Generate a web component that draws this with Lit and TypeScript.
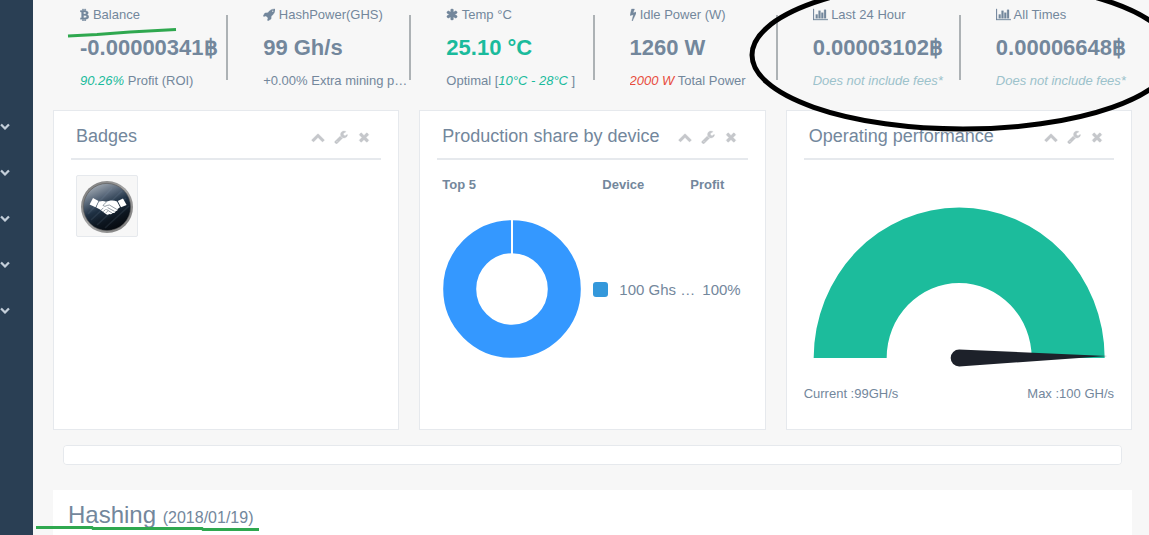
import { LitElement, html, svg, css } from "lit";
import { customElement } from "lit/decorators.js";

const ICONS: Record<string, { w: number; d: string }> = {
  up: { w: 1792, d: "M1683 1331l-166 165q-19 19-45 19t-45-19l-531-531-531 531q-19 19-45 19t-45-19l-166-165q-19-19-19-45.5t19-45.5l742-741q19-19 45-19t45 19l742 741q19 19 19 45.5t-19 45.5z" },
  down: { w: 1792, d: "M1683 808l-742 741q-19 19-45 19t-45-19l-742-741q-19-19-19-45.5t19-45.5l166-165q19-19 45-19t45 19l531 531 531-531q19-19 45-19t45 19l166 165q19 19 19 45.5t-19 45.5z" },
  close: { w: 1792, d: "M1490 1322q0 40-28 68l-136 136q-28 28-68 28t-68-28l-294-294-294 294q-28 28-68 28t-68-28l-136-136q-28-28-28-68t28-68l294-294-294-294q-28-28-28-68t28-68l136-136q28-28 68-28t68 28l294 294 294-294q28-28 68-28t68 28l136 136q28 28 28 68t-28 68l-294 294 294 294q28 28 28 68z" },
  wrench: { w: 1792, d: "M448 1472q0-26-19-45t-45-19-45 19-19 45 19 45 45 19 45-19 19-45zm644-420l-682 682q-37 37-90 37-52 0-91-37l-106-108q-38-36-38-90 0-53 38-91l681-681q39 98 114.5 173.5t173.5 114.5zm634-435q0 39-23 106-47 134-164.5 217.5t-258.5 83.5q-185 0-316.5-131.5t-131.5-316.5 131.5-316.5 316.5-131.5q58 0 121.5 16.5t107.5 46.5q16 11 16 28t-16 28l-293 169v224l193 107q5-3 79-48.5t135.5-81 70.5-35.5q15 0 23.5 10t8.5 25z" },
  rocket: { w: 1664, d: "M1440 448q0-40-28-68t-68-28-68 28-28 68 28 68 68 28 68-28 28-68zm224-288q0 249-75.5 430.5t-253.5 360.5q-81 80-195 176l-20 379q-2 16-16 26l-384 224q-7 4-16 4-12 0-23-9l-64-64q-13-14-8-32l85-276-281-281-276 85q-3 1-9 1-14 0-23-9l-64-64q-17-19-5-39l224-384q10-14 26-16l379-20q96-114 176-195 188-187 358-258t431-71q14 0 24 9.5t10 22.5z" },
  asterisk: { w: 1664, d: "M1482 1050q46 26 59.5 77.5t-12.5 97.5l-64 110q-26 46-77.5 59.5t-97.5-12.5l-266-153v307q0 52-38 90t-90 38h-128q-52 0-90-38t-38-90v-307l-266 153q-46 26-97.5 12.5t-77.5-59.5l-64-110q-26-46-12.5-97.5t59.5-77.5l266-154-266-154q-46-26-59.5-77.5t12.5-97.5l64-110q26-46 77.5-59.5t97.5 12.5l266 153v-307q0-52 38-90t90-38h128q52 0 90 38t38 90v307l266-153q46-26 97.5-12.5t77.5 59.5l64 110q26 46 12.5 97.5t-59.5 77.5l-266 154z" },
  bolt: { w: 896, d: "M885 566q18 20 7 44l-540 1157q-13 25-42 25-4 0-14-2-17-5-25.5-19t-4.5-30l197-808-406 101q-4 1-12 1-18 0-31-11-18-15-13-39l201-825q4-14 16-23t28-9h328q19 0 32 12.5t13 29.5q0 8-5 18l-171 463 396-98q8-2 12-2 19 0 34 15z" },
  chart: { w: 2048, d: "M640 896v512h-256v-512h256zm384-512v1024h-256v-1024h256zm1024 1152v128h-2048v-1536h128v1408h1920zm-640-896v768h-256v-768h256zm384-384v1152h-256v-1152h256z" },
  coin: { w: 1280, d: "M40 350H330V130H500V350H620V130H790V362Q1150 400 1150 660Q1150 840 980 915Q1220 990 1220 1220Q1220 1530 790 1552V1780H620V1556H500V1780H330V1556H40L75 1360H160Q215 1360 215 1300V620Q215 545 130 545H40ZM500 560V840H610Q850 840 850 700Q850 560 610 560ZM500 1040V1345H640Q910 1345 910 1190Q910 1040 640 1040Z" },
};

const icon = (name: string) => {
  const i = ICONS[name];
  return html`<svg class="icon" viewBox="0 0 ${i.w} 1792" style="width:${i.w / 1792}em" aria-hidden="true">
    <path fill-rule="evenodd" d=${i.d}></path>
  </svg>`;
};

const base = css`
  * { box-sizing: border-box; }
  .icon { height: 1em; fill: currentColor; stroke: currentColor; stroke-width: 40; vertical-align: -2px; }
  button {
    border: 0; padding: 0; margin: 0; background: none;
    color: inherit; font: inherit; cursor: pointer; display: flex;
  }
`;

@customElement("dash-panel")
class DashPanel extends LitElement {
  static properties = { heading: {} };
  declare heading: string;

  static styles = [
    base,
    css`
      :host { display: flex; flex-direction: column; background: #fff; border: 1px solid #e6e9ed; padding: 10px 17px; min-height: 320px; box-sizing: border-box; min-width: 0; }
      .head { display: flex; align-items: center; border-bottom: 2px solid #e6e9ed; height: 39px; padding: 0 10px 7px 5px; }
      h2 { margin: 0; font-size: 18px; font-weight: 400; line-height: 20px; white-space: nowrap; flex: 1; }
      .tools { display: flex; gap: 9px; color: #c5c7cb; font-size: 14px; padding-top: 2px; }
      .body { flex: 1; display: flex; flex-direction: column; }
    `,
  ];

  render() {
    return html`
      <div class="head">
        <h2>${this.heading}</h2>
        <div class="tools">
          <button aria-label="Collapse">${icon("up")}</button>
          <button aria-label="Settings">${icon("wrench")}</button>
          <button aria-label="Close">${icon("close")}</button>
        </div>
      </div>
      <div class="body"><slot></slot></div>
    `;
  }
}

const stats = [
  { icon: "coin", label: "Balance", value: "-0.00000341", coin: true, note: html`<i class="good">90.26%</i> Profit (ROI)` },
  { icon: "rocket", label: "HashPower(GHS)", value: "99 Gh/s", note: html`+0.00% Extra mining p…` },
  { icon: "asterisk", label: "Temp °C", value: "25.10 °C", good: true, note: html`Optimal [<i class="good">10°C - 28°C</i> ]` },
  { icon: "bolt", label: "Idle Power (W)", value: "1260 W", note: html`<i class="bad">2000 W</i> Total Power` },
  { icon: "chart", label: "Last 24 Hour", value: "0.00003102", coin: true, note: html`<i class="soft">Does not include fees*</i>` },
  { icon: "chart", label: "All Times", value: "0.00006648", coin: true, note: html`<i class="soft">Does not include fees*</i>` },
];

@customElement("app-root")
class AppRoot extends LitElement {
  static styles = [
    base,
    css`
      :host {
        display: flex; position: relative; overflow: hidden; min-height: 100vh;
        background: #f7f7f7; color: #73879c;
        font: 13px/19px "Liberation Sans", Arial, sans-serif;
      }
      .side { width: 33px; flex: none; background: #2a3f54; color: #c4cfda; padding-top: 121px; display: flex; flex-direction: column; gap: 36px; }
      .side button { height: 10px; font-size: 10px; }
      main { flex: 1; min-width: 0; display: flex; flex-direction: column; padding: 0 7px 0 10px; }
      .stats { display: grid; grid-template-columns: repeat(6, minmax(0, 1fr)); padding-top: 5px; }
      .stat { display: flex; }
      .stat::before { content: ""; width: 2px; height: 65px; margin: 10px 35px 0 0; flex: none; }
      .stat + .stat::before { background: #adb2b5; }
      .info { min-width: 0; flex: 1; }
      .info div { white-space: nowrap; }
      .value { font-size: 22px; line-height: 48px; height: 46px; font-weight: 700; }
      .note { overflow: hidden; text-overflow: ellipsis; line-height: 21px; }
      .good { color: #1abb9c; }
      .bad { color: #e74c3c; }
      .soft { color: #9cc2cb; }
      .panels { display: grid; grid-template-columns: repeat(3, minmax(0, 1fr)); gap: 20px; margin: 19px 10px 0; }
      .badge { width: 62px; height: 62px; margin: 15px 5px; border: 1px solid #e6e9ed; border-radius: 2px; background: #f7f7f7; padding: 3px; }
      .badge svg { display: block; }
      table { margin: 15px 0 0 5px; border-collapse: collapse; table-layout: fixed; width: calc(100% - 5px); }
      th, td { padding: 0; text-align: left; white-space: nowrap; }
      th { height: 19px; }
      .c1 { width: 151px; }
      .c2 { width: 97px; }
      th.device { padding-left: 9px; }
      td { font-size: 15px; padding-top: 25px; }
      td.share { padding-left: 12px; }
      .donut { display: block; width: 140px; height: 140px; }
      .key { display: flex; align-items: center; gap: 11px; }
      .swatch { width: 15px; height: 15px; border-radius: 3px; background: #3498db; flex: none; }
      .gauge { display: block; width: 100%; height: 170px; margin-top: 43px; }
      .range { display: flex; justify-content: space-between; margin-top: 11px; }
      progress { appearance: none; display: block; height: 20px; width: auto; margin: 15px 20px 0; border: 1px solid #e6e9ed; border-radius: 4px; background: #fff; overflow: hidden; }
      progress::-webkit-progress-bar { background: #fff; }
      .hashing { flex: 1; margin: 25px 10px 0; padding: 11px 15px 5px; background: #fff; }
      h3 { margin: 0; font-size: 24px; line-height: 28px; font-weight: 400; }
      small { font-size: 16px; }
      .marks { position: absolute; left: 0; top: 0; width: 1149px; height: 535px; fill: none; pointer-events: none; overflow: visible; }
    `,
  ];

  badge() {
    return svg`
      <defs>
        <linearGradient id="disc" x1="0.25" y1="0" x2="0.7" y2="1">
          <stop offset="0" stop-color="#a9b0b8"/><stop offset="0.28" stop-color="#59687a"/>
          <stop offset="0.5" stop-color="#1f3144"/><stop offset="0.75" stop-color="#0d1620"/><stop offset="1" stop-color="#05080c"/>
        </linearGradient>
        <linearGradient id="rim" x1="0" y1="0" x2="1" y2="1">
          <stop offset="0" stop-color="#777"/><stop offset="0.5" stop-color="#a5a5a5"/><stop offset="1" stop-color="#777"/>
        </linearGradient>
      </defs>
      <circle cx="27" cy="28" r="26" fill="url(#rim)"/>
      <circle cx="27" cy="28" r="23.6" fill="url(#disc)" stroke="#555" stroke-width="0.6"/>
      <path d="M8 35L32 9M11 41L42 12M17 46L46 19M25 49L49 27" stroke="#8ea5bd" stroke-opacity="0.13" stroke-width="1.6"/>
      <g transform="translate(1 0)">
        <g fill="#fff">
          <path d="M12 19L17.5 22 14.5 28.2 8.6 25.6Z"/>
          <path d="M42 19.5L36.8 22 40 28.2 45.6 26Z"/>
          <path d="M18 22.6Q22 21.4 25 22.8L29.5 21.6Q33 21 36 22.6L39 28.2 36.6 30Q37 32 34.6 32.2 34 34.4 31.6 34 30.4 36 28.2 35 26.6 36.6 24.8 35L19 30.6 15.2 28.4Z"/>
        </g>
        <path d="M25.4 23L22 26.4Q23.6 28.4 26.4 26.4L28.4 26 35.8 30.4M26.6 28.6L33.6 32.4M25.4 30.4L31 34M20.2 31L22.4 28.8M22.2 32.6L24.6 30.4M24.4 34.4L26.6 32.2" fill="none" stroke="#26384a" stroke-width="0.5"/>
      </g>
    `;
  }

  render() {
    return html`
      <nav class="side" aria-label="Menu">
        ${[1, 2, 3, 4, 5].map((n) => html`<button aria-label="Expand section ${n}">${icon("down")}</button>`)}
      </nav>
      <main>
        <section class="stats">
          ${stats.map(
            (s) => html`<div class="stat">
              <div class="info">
                <div>${icon(s.icon)} ${s.label}</div>
                <div class="value ${s.good ? "good" : ""}">${s.value}${s.coin ? "฿" : ""}</div>
                <div class="note">${s.note}</div>
              </div>
            </div>`
          )}
        </section>
        <section class="panels">
          <dash-panel heading="Badges">
            <div class="badge"><svg width="54" height="54" viewBox="0 0 54 54" role="img" aria-label="Handshake badge">${this.badge()}</svg></div>
          </dash-panel>
          <dash-panel heading="Production share by device">
            <table>
              <colgroup><col class="c1" /><col class="c2" /><col /></colgroup>
              <thead><tr><th>Top 5</th><th class="device">Device</th><th>Profit</th></tr></thead>
              <tbody>
                <tr>
                  <td>
                    <svg class="donut" viewBox="0 0 140 140" role="img" aria-label="Share by device">
                      <circle cx="70" cy="70" r="52.3" fill="none" stroke="#3498ff" stroke-width="33"></circle>
                      <path d="M70 0V36" stroke="#fff" stroke-width="2"></path>
                    </svg>
                  </td>
                  <td><div class="key"><span class="swatch"></span>100 Ghs …</div></td>
                  <td class="share">100%</td>
                </tr>
              </tbody>
            </table>
          </dash-panel>
          <dash-panel heading="Operating performance">
            <svg class="gauge" viewBox="0 0 310 170" role="img" aria-label="99 of 100 GH/s">
              <path d="M9.5 155A145.5 150.5 0 0 1 300.5 155H227.5A72.5 75 0 0 0 82.5 155Z" fill="#1cbc9c"></path>
              <path d="M303 153L155 146.5A8.5 8.5 0 1 0 155 163.5Z" fill="#1d212a"></path>
            </svg>
            <div class="range"><span>Current :99GH/s</span><span>Max :100 GH/s</span></div>
          </dash-panel>
        </section>
        <progress value="0" max="100" aria-label="Progress"></progress>
        <section class="hashing"><h3>Hashing <small>(2018/01/19)</small></h3></section>
      </main>
      <svg class="marks" viewBox="0 0 1149 535" aria-hidden="true">
        <ellipse cx="963" cy="55" rx="211" ry="74" stroke="#000" stroke-width="5"></ellipse>
        <path d="M68 36L97 34.5L130 32L176 29.5M36 527.5H92L93 528.5H202L203 529.5H259" stroke="#2fa84f" stroke-width="3"></path>
      </svg>
    `;
  }
}
